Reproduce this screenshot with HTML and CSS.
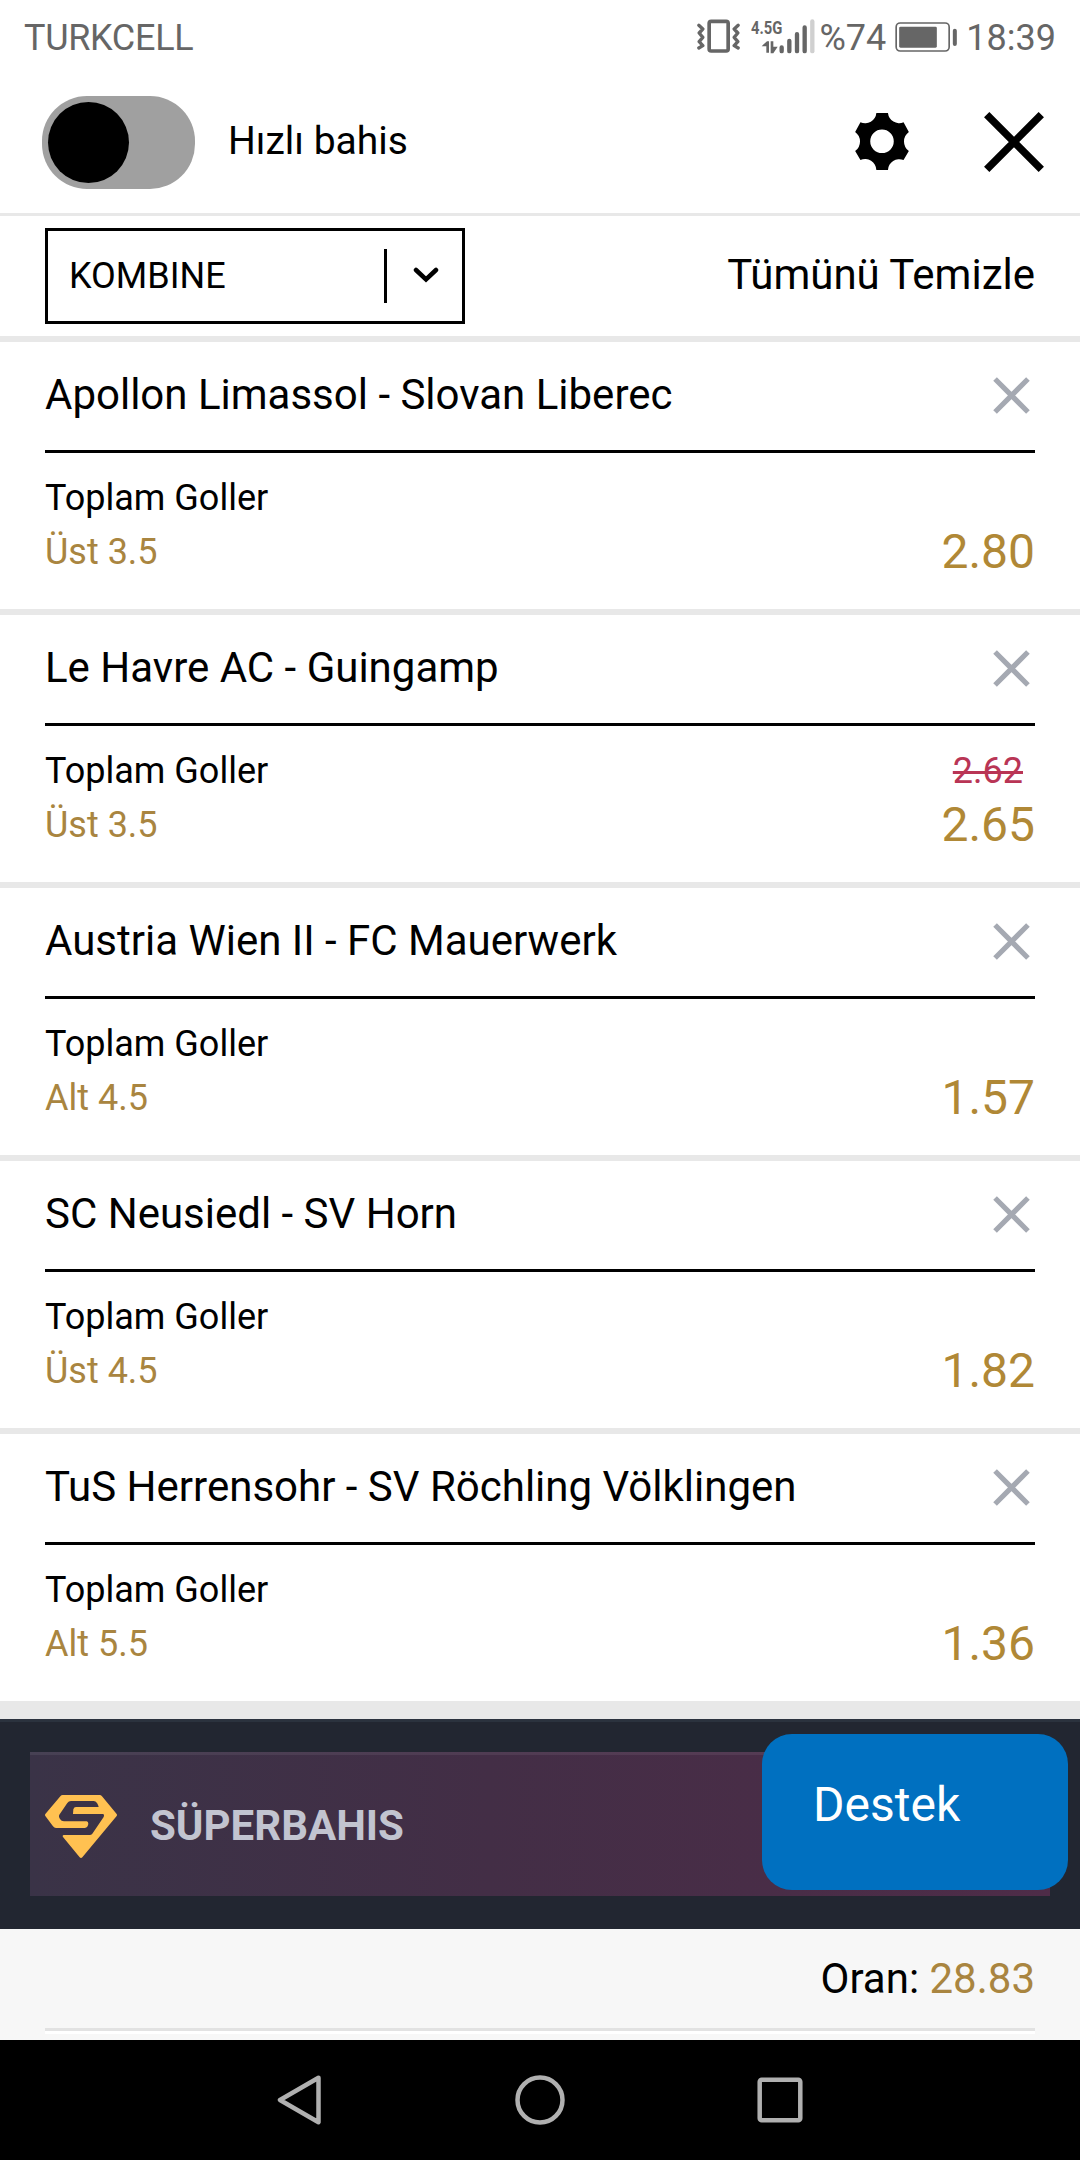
FILE: index.html
```html
<!DOCTYPE html>
<html lang="tr">
<head>
    <meta charset="UTF-8">
    <meta name="viewport" content="width=device-width, initial-scale=1.0">
    <title>Kupon</title>
    <link rel="stylesheet" href="styles.css">
</head>
<body>

<div class="status-bar">
    <span class="carrier">TURKCELL</span>
    <div class="status-icons">
        <svg class="vibrate-icon" viewBox="50 58 128 102">
            <rect x="86" y="65" width="57" height="89" rx="6" fill="none" stroke="#666" stroke-width="11"/>
            <path d="M55 77l12 11-11 12 11 13-11 13 11 12-12 7M173 77l-12 11 11 12-11 13 11 13-11 12 12 7" fill="none" stroke="#666" stroke-width="10" stroke-linejoin="round" stroke-linecap="round"/>
        </svg>
        <svg class="signal-icon" viewBox="212 55 192 104">
            <text x="212" y="101" textLength="94" lengthAdjust="spacingAndGlyphs">4.5G</text>
            <path d="M244 136l16-15h6v35h-8v-20zM271 121h8v17h13l-13 19h-8z" fill="#666"/>
            <path d="M304 140v11M327 120v31M350 100v51M373 80v71" stroke="#666" stroke-width="13" stroke-linecap="round"/>
            <path d="M396 62v89" stroke="#d0d0d0" stroke-width="13" stroke-linecap="round"/>
        </svg>
        <span class="battery-text">%74</span>
        <svg class="battery-icon" viewBox="645 64 188 90">
            <rect x="648" y="67" width="159" height="84" rx="12" fill="none" stroke="#666" stroke-width="5"/>
            <rect x="657" y="78" width="113" height="63" rx="4" fill="#666"/>
            <path d="M824 90v40" stroke="#666" stroke-width="12" stroke-linecap="round"/>
        </svg>
        <span class="clock">18:39</span>
    </div>
</div>

<div class="top-bar">
    <label class="toggle-switch"><span class="knob"></span></label>
    <span class="toggle-label">Hızlı bahis</span>
    <svg class="gear-icon" viewBox="165 99 162 172">
        <path fill-rule="evenodd" d="M229 99H264A34 34 0 0 0 311 127L327 156A36 36 0 0 0 327 214L311 241A34 34 0 0 0 264 271H229A34 34 0 0 0 181 241L165 214A36 36 0 0 0 165 156L181 127A34 34 0 0 0 229 99ZM246 149a35.500 35.500 0 1 0 0 71a35.500 35.500 0 1 0 0-71Z"/>
    </svg>
    <svg class="close-icon" viewBox="0 0 60 60">
        <path d="M2.700 2.700L57.300 57.300M57.300 2.700L2.700 57.300" stroke="#000" stroke-width="7.500"/>
    </svg>
</div>

<div class="filter-bar">
    <div class="bet-select">
        <span>KOMBINE</span>
        <div class="select-arrow">
            <svg viewBox="0 0 26 16">
                <path d="M3 3l10 9.500L23 3" fill="none" stroke="#000" stroke-width="4.500" stroke-linecap="round"/>
            </svg>
        </div>
    </div>
    <span class="clear-all">Tümünü Temizle</span>
</div>

<div class="bet-list">
    <div class="bet">
        <div class="bet-header">
            <span class="match">Apollon Limassol - Slovan Liberec</span>
            <svg class="remove-icon" viewBox="0 0 36 36"><path d="M2 2L34 34M34 2L2 34"/></svg>
        </div>
        <div class="bet-body">
            <div class="bet-info">
                <div>Toplam Goller</div>
                <div class="pick">Üst 3.5</div>
            </div>
            <div class="bet-odds">
                <div class="odds">2.80</div>
            </div>
        </div>
    </div>
    <div class="bet">
        <div class="bet-header">
            <span class="match">Le Havre AC - Guingamp</span>
            <svg class="remove-icon" viewBox="0 0 36 36"><path d="M2 2L34 34M34 2L2 34"/></svg>
        </div>
        <div class="bet-body">
            <div class="bet-info">
                <div>Toplam Goller</div>
                <div class="pick">Üst 3.5</div>
            </div>
            <div class="bet-odds">
                <div class="old-odds">2.62</div>
                <div class="odds">2.65</div>
            </div>
        </div>
    </div>
    <div class="bet">
        <div class="bet-header">
            <span class="match">Austria Wien II - FC Mauerwerk</span>
            <svg class="remove-icon" viewBox="0 0 36 36"><path d="M2 2L34 34M34 2L2 34"/></svg>
        </div>
        <div class="bet-body">
            <div class="bet-info">
                <div>Toplam Goller</div>
                <div class="pick">Alt 4.5</div>
            </div>
            <div class="bet-odds">
                <div class="odds">1.57</div>
            </div>
        </div>
    </div>
    <div class="bet">
        <div class="bet-header">
            <span class="match">SC Neusiedl - SV Horn</span>
            <svg class="remove-icon" viewBox="0 0 36 36"><path d="M2 2L34 34M34 2L2 34"/></svg>
        </div>
        <div class="bet-body">
            <div class="bet-info">
                <div>Toplam Goller</div>
                <div class="pick">Üst 4.5</div>
            </div>
            <div class="bet-odds">
                <div class="odds">1.82</div>
            </div>
        </div>
    </div>
    <div class="bet">
        <div class="bet-header">
            <span class="match">TuS Herrensohr - SV Röchling Völklingen</span>
            <svg class="remove-icon" viewBox="0 0 36 36"><path d="M2 2L34 34M34 2L2 34"/></svg>
        </div>
        <div class="bet-body">
            <div class="bet-info">
                <div>Toplam Goller</div>
                <div class="pick">Alt 5.5</div>
            </div>
            <div class="bet-odds">
                <div class="odds">1.36</div>
            </div>
        </div>
    </div>
</div>

<div class="promo">
    <div class="promo-banner">
        <svg class="promo-logo" viewBox="135 345 216 189">
            <path fill="#ffc151" d="M188 345H299Q303 345 306 349L350 402Q352 405 350 408L247 532Q243 536 239 532L189 471Q186 465 192 465H269Q274 465 277 461L311 411Q314 402 308 402H219L220 388Q222 381 228 381H296Q296 377 291 369Q287 363 281 363H213Q206 363 202 369L178 404Q175 410 180 417Q184 424 192 424H260Q267 426 264 436Q262 444 255 444H168Q163 444 159 439L136 408Q134 405 136 402L181 349Q184 345 188 345Z"/>
        </svg>
        <span>SÜPERBAHIS</span>
    </div>
    <button class="support-button">Destek</button>
</div>

<div class="total">
    <div class="total-row">Oran:&nbsp;<span class="total-odds">28.83</span></div>
</div>

<div class="nav-bar">
    <svg viewBox="0 0 50 50"><path d="M43.500 2.800L5 25L43.500 47.200Z" stroke-linejoin="round"/></svg>
    <svg viewBox="0 0 50 50"><circle cx="25" cy="25" r="22.500"/></svg>
    <svg viewBox="0 0 50 50"><rect x="4.700" y="4.700" width="40.600" height="40.600" rx="2"/></svg>
</div>

</body>
</html>
```
FILE: styles.css
```css
/* Global Styles */
* {
    box-sizing: border-box;
}

body {
    margin: 0;
    width: 1080px;
    font-family: Roboto, sans-serif;
    font-size: 36px;
    color: #000;
    background-color: #fff;
}

svg {
    display: block;
    flex: none;
}

/* Status Bar */
.status-bar {
    display: flex;
    justify-content: space-between;
    align-items: center;
    height: 72px;
    padding: 3px 24px 0 24px;
    color: #666;
}

.carrier {
    letter-spacing: -0.3px;
}

.status-icons {
    display: flex;
    align-items: center;
}

.vibrate-icon {
    width: 43px;
    height: 34px;
    margin: 0 11px 3px 0;
}

.signal-icon {
    width: 64px;
    height: 35px;
    margin: 0 5px 3px 0;
    overflow: visible;
}

.signal-icon text {
    font-size: 57px;
    font-weight: bold;
    fill: #666;
}

.battery-icon {
    width: 63px;
    height: 30px;
    margin: 0 8px 1px 9px;
}

/* Top Bar */
.top-bar {
    display: flex;
    align-items: center;
    height: 144px;
    padding: 0 36px 0 42px;
    border-bottom: 3px solid #e8e8e8;
}

.toggle-switch {
    width: 153px;
    height: 93px;
    padding: 6px;
    border-radius: 45px;
    background-color: #a0a0a0;
}

.knob {
    display: block;
    width: 81px;
    height: 81px;
    border-radius: 50%;
    background-color: #000;
}

.toggle-label {
    flex: 1;
    margin: 0 0 3px 33px;
    font-size: 39px;
}

.gear-icon {
    width: 54px;
    height: 57px;
    margin: 0 75px 2px 0;
}

.close-icon {
    width: 60px;
    height: 60px;
    margin-bottom: 1px;
}

/* Filter Bar */
.filter-bar {
    display: flex;
    justify-content: space-between;
    align-items: center;
    height: 126px;
    padding: 0 45px;
    border-bottom: 6px solid #e8e8e8;
}

.bet-select {
    display: flex;
    justify-content: space-between;
    align-items: center;
    width: 420px;
    height: 96px;
    padding-left: 21px;
    border: 3px solid #000;
}

.select-arrow {
    display: flex;
    align-items: center;
    width: 78px;
    height: 54px;
    padding: 0 0 3px 26px;
    border-left: 3px solid #000;
}

.select-arrow svg {
    width: 26px;
    height: 16px;
}

.clear-all {
    margin-bottom: 3px;
    font-size: 42px;
}

/* Bets */
.bet-list {
    border-bottom: 12px solid #e8e8e8;
}

.bet {
    height: 273px;
    padding: 0 45px;
    border-bottom: 6px solid #e8e8e8;
}

.bet-header {
    display: flex;
    justify-content: space-between;
    align-items: center;
    height: 111px;
    padding: 0 5px 2px 0;
    border-bottom: 3px solid #000;
    font-size: 42px;
}

.match {
    margin-bottom: 2px;
}

.remove-icon {
    width: 37px;
    height: 37px;
    stroke: #a5a9b2;
    stroke-width: 5;
}

.bet-body {
    display: flex;
    justify-content: space-between;
    align-items: flex-end;
    padding-top: 18px;
    line-height: 54px;
}

.pick {
    color: #a98540;
}

.bet-odds {
    display: flex;
    flex-direction: column;
    align-items: flex-end;
}

.old-odds {
    margin-right: 12px;
    color: #b93555;
    text-decoration: line-through;
    text-decoration-thickness: 3px;
}

.odds {
    font-size: 48px;
    color: #b08836;
}

/* Promo */
.promo {
    position: relative;
    height: 210px;
    padding: 30px;
    border-top: 3px solid #2b323e;
    background-color: #222631;
}

.promo-banner {
    display: flex;
    align-items: center;
    width: 1020px;
    height: 144px;
    padding-left: 15px;
    border-top: 3px solid rgba(255, 255, 255, 0.07);
    background: linear-gradient(to right, #3a3347, #432e46 45%, #4e2c48) border-box;
    font-size: 42px;
    font-weight: bold;
    color: #c2c4d0;
}

.promo-logo {
    width: 72px;
    height: 63px;
    margin: 2px 33px 0 0;
}

.support-button {
    position: absolute;
    top: 12px;
    right: 12px;
    width: 306px;
    height: 156px;
    padding: 0 0 15px 51px;
    border: none;
    border-radius: 30px;
    background-color: #0070c0;
    color: #fff;
    font-family: inherit;
    font-size: 48px;
    text-align: left;
}

/* Total */
.total {
    height: 111px;
    padding: 0 45px;
    background-color: #f7f7f7;
}

.total-row {
    display: flex;
    justify-content: flex-end;
    align-items: center;
    height: 102px;
    border-bottom: 3px solid #e2e2e2;
    box-shadow: 0 3px 0 #fff;
    font-size: 42px;
}

.total-odds {
    color: #a98540;
}

/* Navigation */
.nav-bar {
    display: flex;
    justify-content: center;
    align-items: center;
    gap: 190px;
    height: 120px;
    background-color: #000;
}

.nav-bar svg {
    width: 50px;
    height: 50px;
    fill: none;
    stroke: #b0b0b0;
    stroke-width: 4.5;
}
```
